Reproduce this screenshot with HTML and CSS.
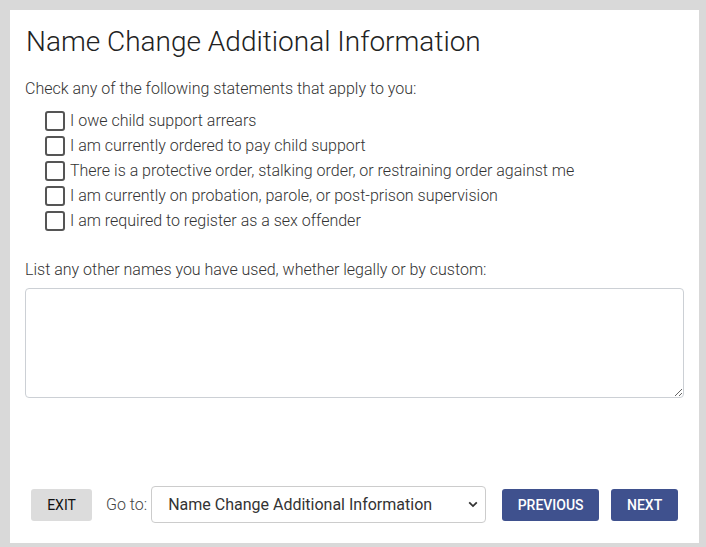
FILE: index.html
```html
<!DOCTYPE html>
<html lang="en">
<head>
<meta charset="utf-8">
<title>Name Change Additional Information</title>
<link rel="stylesheet" href="styles.css">
</head>
<body>
<main class="card">
  <h1 class="title">Name Change Additional Information</h1>
  <p class="prompt">Check any of the following statements that apply to you:</p>
  <ul class="checks">
    <li><label class="check"><input type="checkbox" class="box"><span>I owe child support arrears</span></label></li>
    <li><label class="check"><input type="checkbox" class="box"><span>I am currently ordered to pay child support</span></label></li>
    <li><label class="check"><input type="checkbox" class="box"><span>There is a protective order, stalking order, or restraining order against me</span></label></li>
    <li><label class="check"><input type="checkbox" class="box"><span>I am currently on probation, parole, or post-prison supervision</span></label></li>
    <li><label class="check"><input type="checkbox" class="box"><span>I am required to register as a sex offender</span></label></li>
  </ul>
  <label class="prompt names-label" for="names">List any other names you have used, whether legally or by custom:</label>
  <textarea id="names" class="names"></textarea>
  <footer class="footer">
    <button class="btn btn-exit" type="button">EXIT</button>
    <span class="goto">Go to:</span>
    <div class="select-wrap">
      <select class="select">
        <option>Name Change Additional Information</option>
      </select>
      <svg class="chev" width="10" height="7" viewBox="0 0 10 7"><path d="M1.2 1.3 5 5.1 8.8 1.3" fill="none" stroke="#333" stroke-width="1.8"/></svg>
    </div>
    <button class="btn btn-primary btn-prev" type="button">PREVIOUS</button>
    <button class="btn btn-primary btn-next" type="button">NEXT</button>
  </footer>
</main>
</body>
</html>
```
FILE: styles.css
```css
html, body {
  height: 100%;
}
body {
  margin: 0;
  box-sizing: border-box;
  padding: 10px 7px 4px 10px;
  background: #d9d9d9;
  font-family: Roboto, "Liberation Sans", sans-serif;
  color: #333;
}
.card {
  box-sizing: border-box;
  height: 100%;
  background: #fff;
  padding: 15px 15px 20px 15px;
  display: flex;
  flex-direction: column;
}
.title {
  margin: 0 0 0 1px;
  font-size: 28px;
  font-weight: 300;
  line-height: 34px;
  color: #222;
}
.prompt {
  margin: 0;
  font-size: 16px;
  font-weight: 300;
  line-height: 22px;
  color: #333;
}
.names-label {
  display: block;
}
p.prompt {
  margin-top: 19px;
}
.checks {
  list-style: none;
  margin: 8px 0 0 0;
  padding: 0 0 0 20px;
}
.check {
  display: flex;
  align-items: center;
  height: 25px;
  font-size: 16px;
  font-weight: 300;
  color: #333;
}
.box {
  appearance: none;
  -webkit-appearance: none;
  margin: 0 5px 0 0;
  width: 20px;
  height: 20px;
  box-sizing: border-box;
  border: 2px solid #555;
  border-radius: 3px;
  background: #fff;
}
.names-label {
  margin-top: 26px;
}
.names {
  margin-top: 7px;
  box-sizing: border-box;
  width: 100%;
  height: 110px;
  border: 1px solid #ccd0d5;
  border-radius: 4px;
  resize: vertical;
  font-family: inherit;
  font-size: 16px;
}
.footer {
  margin-top: auto;
  display: flex;
  align-items: center;
  padding: 0 6px;
}
.btn {
  flex-shrink: 0;
  height: 32px;
  border: none;
  border-radius: 3px;
  font-family: Roboto, "Liberation Sans", sans-serif;
  font-size: 14px;
  padding: 0;
  cursor: pointer;
}
.btn-exit {
  width: 61px;
  background: #dcdcdc;
  color: #111;
  font-weight: 400;
}
.goto {
  flex-shrink: 0;
  white-space: nowrap;
  margin-left: 14px;
  font-size: 16px;
  font-weight: 300;
  color: #444;
}
.select-wrap {
  flex-shrink: 0;
  position: relative;
  margin-left: 4px;
}
.select {
  appearance: none;
  -webkit-appearance: none;
  width: 335px;
  height: 37px;
  box-sizing: border-box;
  border: 1px solid #ccc;
  border-radius: 4px;
  background: #fff;
  padding: 0 30px 0 16px;
  font-family: Roboto, "Liberation Sans", sans-serif;
  font-size: 16px;
  color: #333;
  display: block;
}
.chev {
  position: absolute;
  right: 8px;
  top: 15px;
  pointer-events: none;
}
.btn-primary {
  background: #3f518e;
  color: #fff;
  font-weight: 500;
}
.btn-prev {
  margin-left: 16px;
  width: 97px;
}
.btn-next {
  margin-left: 12px;
  width: 67px;
}
```
